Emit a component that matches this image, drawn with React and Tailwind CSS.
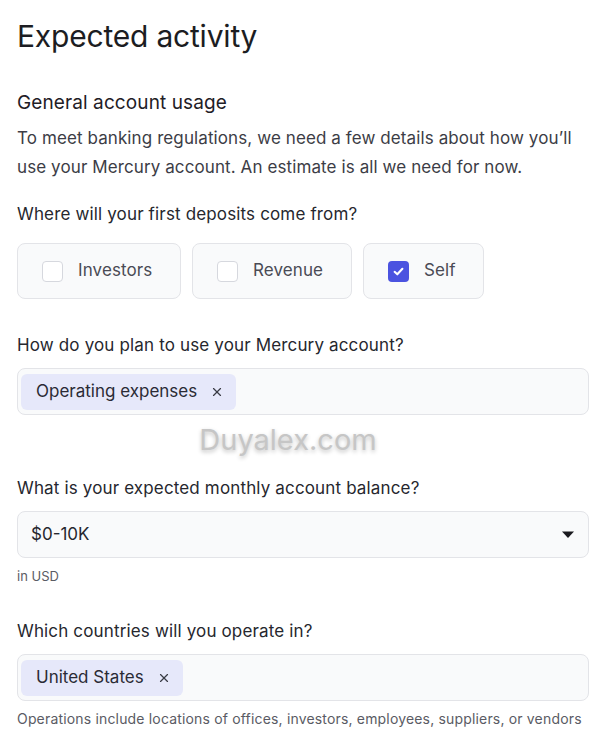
import { X } from "lucide-react";

const font = { fontFamily: "Inter, 'Noto Sans', sans-serif" };

const sources = [
  { label: "Investors", checked: false, width: "w-[164px]" },
  { label: "Revenue", checked: false, width: "w-[160px]" },
  { label: "Self", checked: true, width: "w-[121px]" },
];

const Checkbox = ({ checked }) =>
  checked ? (
    <span className="flex h-[21px] w-[21px] items-center justify-center rounded-[4px] bg-[#4b53e0]">
      <svg width="13" height="13" viewBox="0 0 12 12" fill="none">
        <path d="M2.4 6.3 4.9 8.6 9.6 3.5" stroke="white" strokeWidth="1.9" strokeLinecap="round" strokeLinejoin="round" />
      </svg>
    </span>
  ) : (
    <span className="h-[21px] w-[21px] rounded-[4px] border border-[#d6d8de] bg-white" />
  );

const Chip = ({ label }) => (
  <span className="flex h-9 items-center gap-[13px] rounded-[6px] bg-[#e6e8fa] pl-[15px] pr-[12px] text-[17px] text-[#2a2b35]">
    {label}
    <X size={14} strokeWidth={2} className="text-[#3a3b45]" />
  </span>
);

const Label = ({ children }) => (
  <p className="text-[17px] leading-[24px] tracking-[0.15px] text-[#26272e]">{children}</p>
);

export default function App() {
  return (
    <div style={font} className="min-h-screen w-[612px] bg-white px-[17px] pt-[16px] text-[#26272e]">
      <h1 className="text-[30px] leading-[40px] tracking-[-0.2px] text-[#1c1d22]">Expected activity</h1>

      <h2 className="mt-[34px] text-[19px] leading-[26px] tracking-[0.1px] text-[#1f2026]">General account usage</h2>
      <p className="mt-[8px] max-w-[560px] text-[17px] leading-[29px] tracking-[0.1px] text-[#3c3d46]">
        To meet banking regulations, we need a few details about how you’ll use your Mercury account. An estimate is all we need for now.
      </p>

      <div className="mt-[20px]">
        <Label>Where will your first deposits come from?</Label>
        <div className="mt-[17px] flex gap-[11px]">
          {sources.map((s) => (
            <div
              key={s.label}
              className={`flex h-[56px] ${s.width} items-center gap-[15px] rounded-[8px] border border-[#e3e4e8] bg-[#f9fafb] pl-[24px] text-[17px] tracking-[0.1px] text-[#4a4b55]`}
            >
              <Checkbox checked={s.checked} />
              {s.label}
            </div>
          ))}
        </div>
      </div>

      <div className="mt-[34px]">
        <Label>How do you plan to use your Mercury account?</Label>
        <div className="mt-[11px] flex h-[47px] w-[572px] items-center rounded-[8px] border border-[#e3e4e8] bg-[#f9fafb] px-[3px]">
          <Chip label="Operating expenses" />
        </div>
      </div>

      <div className="flex h-[50px] items-center justify-center pr-[36px]">
        <span className="text-[29px] text-[#c6c6c6] [text-shadow:0_2px_4px_rgba(0,0,0,0.25)]">Duyalex.com</span>
      </div>

      <div className="mt-[11px]">
        <Label>What is your expected monthly account balance?</Label>
        <div className="mt-[11px] flex h-[47px] w-[572px] items-center justify-between rounded-[8px] border border-[#e3e4e8] bg-[#f9fafb] pl-[13px] pr-[13px]">
          <span className="text-[17px] text-[#26272e]">$0-10K</span>
          <svg width="14" height="9" viewBox="0 0 14 9">
            <path d="M1 1.5h12L7 8z" fill="#1a1a1f" />
          </svg>
        </div>
        <p className="mt-[8px] text-[13px] leading-[20px] text-[#5a5b64]">in USD</p>
      </div>

      <div className="mt-[33px]">
        <Label>Which countries will you operate in?</Label>
        <div className="mt-[11px] flex h-[47px] w-[572px] items-center rounded-[8px] border border-[#e3e4e8] bg-[#f9fafb] px-[3px]">
          <Chip label="United States" />
        </div>
        <p className="mt-[8px] whitespace-nowrap text-[14px] leading-[20px] tracking-[0.17px] text-[#5a5b64]">
          Operations include locations of offices, investors, employees, suppliers, or vendors
        </p>
      </div>
    </div>
  );
}
